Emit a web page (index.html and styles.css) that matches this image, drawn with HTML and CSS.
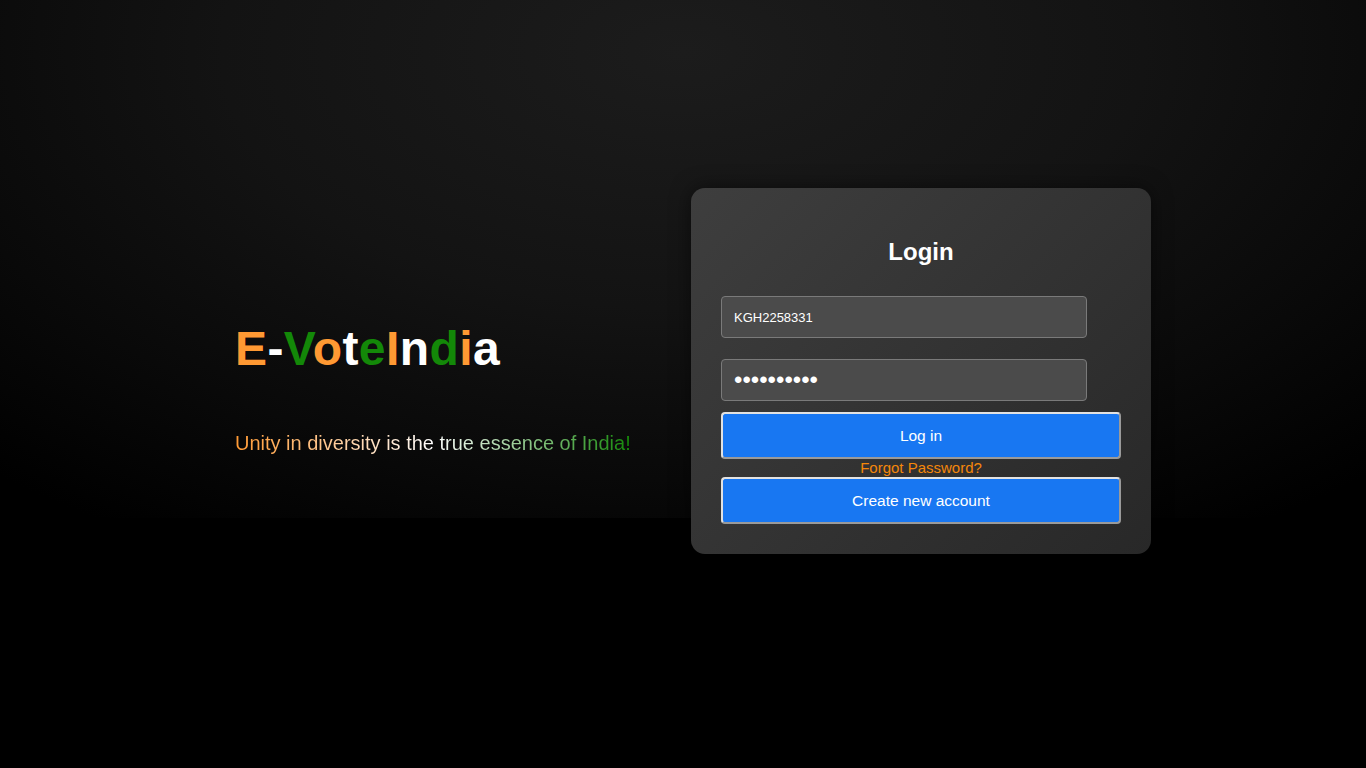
FILE: index.html
```html
<!DOCTYPE html>
<html lang="en">
<head>
<meta charset="utf-8">
<title>E-VoteIndia - Login</title>
<link rel="stylesheet" href="styles.css">
</head>
<body>
<main class="layout">
  <div class="brand">
    <h1 class="logo"><span class="saffron">E</span><span class="white">-</span><span class="green">V</span><span class="saffron">o</span><span class="white">t</span><span class="green">e</span><span class="saffron">I</span><span class="white">n</span><span class="green">d</span><span class="saffron">i</span><span class="white">a</span></h1>
    <p class="tagline">Unity in diversity is the true essence of India!</p>
  </div>
  <form class="card">
    <h2 class="card-title">Login</h2>
    <input class="field" type="text" value="KGH2258331">
    <input class="field field-pass" type="password" value="abcdefghij">
    <button class="btn" type="button">Log in</button>
    <a class="forgot" href="#">Forgot Password?</a>
    <button class="btn" type="button">Create new account</button>
  </form>
</main>
</body>
</html>
```

FILE: styles.css
```css
html {
  background: #000;
}

body {
  margin: 0;
  padding: 0;
  min-height: 768px;
  background-color: #000;
  background-image: radial-gradient(ellipse 75% 110% at 50% 10%, #1c1c1c 0%, #131313 45%, #090909 75%, #000 100%);
  background-repeat: no-repeat;
  background-size: 100% 518px;
  font-family: "Liberation Sans", Arial, sans-serif;
}

.layout {
  display: flex;
  align-items: flex-start;
  padding: 188px 0 0 235px;
}

.brand {
  width: 456px;
  margin-top: 133px;
}

.logo {
  margin: 0;
  font-size: 48px;
  font-weight: bold;
  line-height: 55px;
  letter-spacing: 0.4px;
}

.saffron { color: #ff9933; }
.white { color: #ffffff; }
.green { color: #138808; }

.tagline {
  margin: 56px 0 0;
  font-size: 20px;
  line-height: 23px;
  display: inline-block;
  background: linear-gradient(to right, #ff9933 0%, #ffffff 50%, #138808 100%);
  -webkit-background-clip: text;
  background-clip: text;
  color: transparent;
}

.card {
  width: 400px;
  padding: 30px;
  border-radius: 14px;
  background: linear-gradient(135deg, #3e3e3e 0%, #333 50%, #282828 100%);
  box-shadow: 0 0 20px rgba(0, 0, 0, 0.5);
  display: flex;
  flex-direction: column;
  align-items: flex-start;
}

.card-title {
  align-self: stretch;
  margin: 20px 0 30px;
  text-align: center;
  color: #fff;
  font-size: 24px;
  line-height: 28px;
  font-weight: bold;
}

.field {
  box-sizing: border-box;
  width: 366px;
  height: 42px;
  margin: 0;
  padding: 0 12px;
  border: 1px solid #7a7a7a;
  border-radius: 4px;
  background: #4b4b4b;
  color: #fff;
  font-family: "Liberation Sans", Arial, sans-serif;
  font-size: 13px;
  outline: none;
}

.field + .field {
  margin-top: 21px;
}

.field-pass {
  font-size: 24px;
  letter-spacing: 0;
}

.btn {
  box-sizing: border-box;
  width: 400px;
  height: 47px;
  margin: 11px 0 0;
  border-style: solid;
  border-width: 2px;
  border-color: #e2e2e2 #9a9a9a #9a9a9a #e2e2e2;
  border-radius: 4px;
  background: #1877f2;
  color: #fff;
  font-family: "Liberation Sans", Arial, sans-serif;
  font-size: 15.5px;
  cursor: pointer;
}

.forgot {
  align-self: stretch;
  text-align: center;
  color: #f5870a;
  font-size: 15px;
  line-height: 18px;
  text-decoration: none;
}

.forgot + .btn {
  margin-top: 0;
}
```
